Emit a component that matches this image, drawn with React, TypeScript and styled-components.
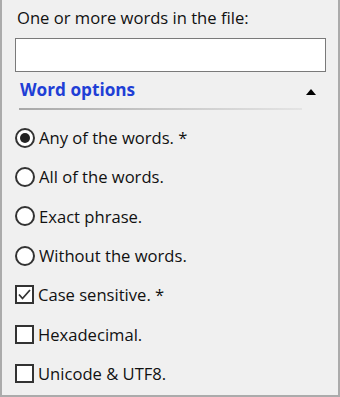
import styled, { createGlobalStyle } from "styled-components";

const GlobalStyle = createGlobalStyle`
  html, body {
    margin: 0;
    padding: 0;
    background: #f0f0f0;
  }
  body {
    font-family: "Open Sans", "Noto Sans", sans-serif;
  }
`;

const Panel = styled.div`
  box-sizing: border-box;
  width: 340px;
  height: 397px;
  display: flex;
  flex-direction: column;
  padding: 4px 13px 0 13px;
  background: #f0f0f0;
  border: 2px solid #ababab;
  border-top: none;
  color: #111;
  font-size: 16.6px;
`;

const FieldLabel = styled.div`
  line-height: 28px;
  padding-left: 2px;
`;

const SearchInput = styled.input`
  box-sizing: border-box;
  height: 34px;
  width: 311px;
  margin-top: 6px;
  border: 1px solid #7a7a7a;
  background: #fff;
  outline: none;
`;

const SectionHeader = styled.div`
  display: flex;
  align-items: center;
  justify-content: space-between;
  height: 34px;
  padding: 0 9px 0 5px;
`;

const SectionTitle = styled.span`
  color: #1f3fd6;
  font-weight: 700;
  font-size: 17.2px;
`;

const Caret = styled.span`
  width: 0;
  height: 0;
  margin-top: 6px;
  border-left: 5.5px solid transparent;
  border-right: 5.5px solid transparent;
  border-bottom: 6px solid #000;
`;

const Divider = styled.div`
  height: 2px;
  margin: 2px 23px 0 4px;
  background: linear-gradient(to right, #a8a8a8, #c8c8c8 50%, #e4e4e4);
`;

const OptionList = styled.div`
  display: flex;
  flex-direction: column;
  padding-top: 8px;
`;

const Option = styled.label`
  display: flex;
  align-items: center;
  gap: 4px;
  height: 39.3px;
`;

const RadioMark = styled.span<{ $checked?: boolean }>`
  box-sizing: border-box;
  width: 20px;
  height: 20px;
  border-radius: 50%;
  border: 2px solid #333;
  background: #fff;
  display: flex;
  align-items: center;
  justify-content: center;

  &::after {
    content: "";
    width: 10px;
    height: 10px;
    border-radius: 50%;
    background: #222;
    display: ${(p) => (p.$checked ? "block" : "none")};
  }
`;

const CheckMark = styled.span`
  box-sizing: border-box;
  width: 19px;
  height: 19px;
  border: 2px solid #333;
  background: #fff;
  display: flex;
  align-items: center;
  justify-content: center;
`;

const radios = [
  { text: "Any of the words. *", checked: true },
  { text: "All of the words.", checked: false },
  { text: "Exact phrase.", checked: false },
  { text: "Without the words.", checked: false },
];

const checks = [
  { text: "Case sensitive. *", checked: true },
  { text: "Hexadecimal.", checked: false },
  { text: "Unicode & UTF8.", checked: false },
];

export default function App() {
  return (
    <>
      <GlobalStyle />
      <Panel>
        <FieldLabel>One or more words in the file:</FieldLabel>
        <SearchInput type="text" />
        <SectionHeader>
          <SectionTitle>Word options</SectionTitle>
          <Caret />
        </SectionHeader>
        <Divider />
        <OptionList>
          {radios.map((r) => (
            <Option key={r.text}>
              <RadioMark $checked={r.checked} />
              {r.text}
            </Option>
          ))}
          {checks.map((c) => (
            <Option key={c.text}>
              <CheckMark>
                {c.checked && (
                  <svg width="13" height="11" viewBox="0 0 13 11">
                    <path d="M1 5.5 L4.5 9.5 L12 1" fill="none" stroke="#333" strokeWidth="1.8" />
                  </svg>
                )}
              </CheckMark>
              {c.text}
            </Option>
          ))}
        </OptionList>
      </Panel>
    </>
  );
}
